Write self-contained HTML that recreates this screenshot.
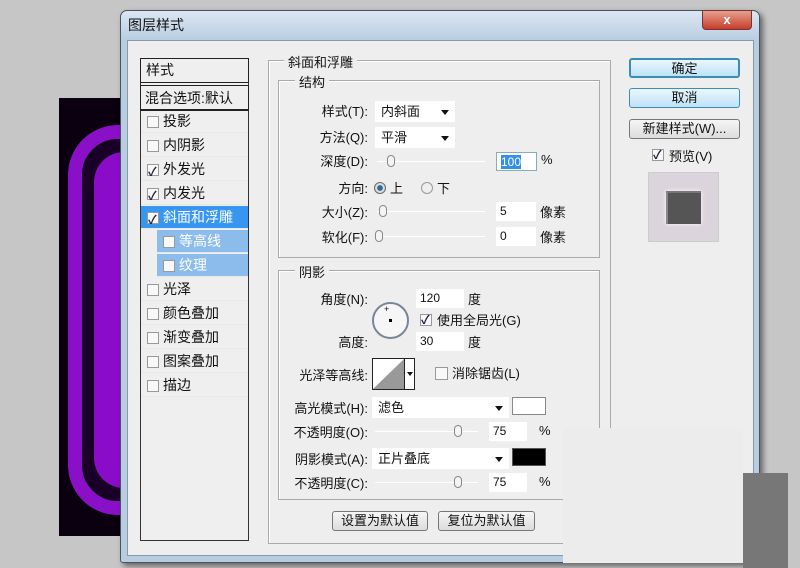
<!DOCTYPE html>
<html><head><meta charset="utf-8"><style>
*{margin:0;padding:0;box-sizing:border-box}
body{width:800px;height:568px;background:#c6c6c6;position:relative;overflow:hidden;font-family:"Liberation Sans","Noto Sans CJK SC",sans-serif;font-size:13px;color:#111}
.a{position:absolute}
.lbl{position:absolute;text-align:right;width:120px;white-space:nowrap;margin-top:-2px}
.in{position:absolute;background:#fff;height:19px;padding-left:4px;line-height:19px;font-size:12px}
.dd{position:absolute;background:#fff;height:21px;line-height:21px;padding-left:6px}
.dd:after{content:"";position:absolute;right:6px;top:9px;border:4px solid transparent;border-top:5px solid #111;border-bottom:0}
.sl{position:absolute;height:1px;background:#bbb;border-bottom:1px solid #fff}
.th{position:absolute;width:8px;height:12px;border:1px solid #888;border-radius:4px;background:#f4f4f4;top:-6px}
.cb{position:absolute;width:12px;height:12px;border:1px solid #999;background:#f8f8f8}
.ck:after{content:"✓";position:absolute;left:0;top:-4px;font-size:12px;color:#224;font-weight:bold}
.it{position:absolute;left:141px;width:107px;height:23px;line-height:23px;padding-left:22px;border-bottom:1px solid #e6e6e6;font-size:14px}
.it .cb{left:6px;top:6px}
.grp{position:absolute;border:1px solid #aaa;box-shadow:1px 1px 0 #fff inset}
.gt{position:absolute;background:#eee;padding:0 4px;font-size:13px}
.btn{position:absolute;height:20px;border:1px solid #777;border-radius:3px;background:linear-gradient(#f6f6f6,#dcdcdc);text-align:center;line-height:18px;font-size:13px}
.bb{border-color:#3c8cb8;background:linear-gradient(#eaf6fd,#bfe2f6)}
</style></head><body>
<!-- purple image -->
<div class="a" style="left:59px;top:98px;width:64px;height:438px;background:#0a0010"></div>
<div class="a" style="left:68px;top:125px;width:120px;height:390px;border:14px solid #8a10c8;border-radius:50px"></div>
<div class="a" style="left:82px;top:140px;width:100px;height:360px;border:12px solid #1a0028;border-radius:40px"></div>
<div class="a" style="left:94px;top:152px;width:80px;height:336px;background:#8a0cc8;border-radius:30px"></div>
<!-- dialog -->
<div class="a" style="left:120px;top:10px;width:640px;height:553px;background:linear-gradient(#dbe6f2,#b8cde2 30px,#b8cde2);border:1px solid #4a5360;border-radius:7px 7px 3px 3px;box-shadow:3px 3px 6px rgba(0,0,0,.5)"></div>
<div class="a" style="left:128px;top:15px;font-size:14px">图层样式</div>
<div class="a" style="left:702px;top:10px;width:50px;height:20px;background:linear-gradient(#e8a090,#c53d2a);border:1px solid #733;border-radius:0 0 4px 4px;color:#fff;text-align:center;font-weight:bold;line-height:18px">x</div>
<div class="a" style="left:127px;top:40px;width:627px;height:516px;background:#eeeeee;border:1px solid #8899aa"></div>
<!-- left list -->
<div class="a" style="left:140px;top:58px;width:109px;height:483px;border:1px solid #333;background:#efefef"></div>
<div class="a" style="left:140px;top:58px;width:109px;height:25px;border:1px solid #222;padding-left:5px;line-height:23px;font-size:14px">样式</div>
<div class="a" style="left:140px;top:85px;width:109px;height:26px;border:1px solid #222;border-width:1px 1px 2px;padding-left:4px;line-height:24px;font-size:14px">混合选项:默认</div>
<div class="it" style="top:110px"><span class="cb"></span>投影</div>
<div class="it" style="top:134px"><span class="cb"></span>内阴影</div>
<div class="it" style="top:158px"><span class="cb ck"></span>外发光</div>
<div class="it" style="top:182px"><span class="cb ck"></span>内发光</div>
<div class="it" style="top:206px;background:#3797f0;color:#fff"><span class="cb ck"></span>斜面和浮雕</div>
<div class="it" style="top:230px;left:157px;width:91px;background:#8cbcec;color:#fff"><span class="cb"></span>等高线</div>
<div class="it" style="top:254px;left:157px;width:91px;background:#8cbcec;color:#fff"><span class="cb"></span>纹理</div>
<div class="it" style="top:278px"><span class="cb"></span>光泽</div>
<div class="it" style="top:302px"><span class="cb"></span>颜色叠加</div>
<div class="it" style="top:326px"><span class="cb"></span>渐变叠加</div>
<div class="it" style="top:350px"><span class="cb"></span>图案叠加</div>
<div class="it" style="top:374px"><span class="cb"></span>描边</div>
<!-- main group -->
<div class="grp" style="left:268px;top:60px;width:343px;height:484px"></div>
<div class="gt" style="left:284px;top:52px">斜面和浮雕</div>
<div class="grp" style="left:278px;top:80px;width:322px;height:178px"></div>
<div class="gt" style="left:295px;top:72px">结构</div>
<div class="lbl" style="left:248px;top:103px">样式(T):</div>
<div class="dd" style="left:375px;top:101px;width:80px">内斜面</div>
<div class="lbl" style="left:248px;top:129px">方法(Q):</div>
<div class="dd" style="left:375px;top:127px;width:80px">平滑</div>
<div class="lbl" style="left:248px;top:153px">深度(D):</div>
<div class="sl" style="left:377px;top:161px;width:108px"><div class="th" style="left:10px"></div></div>
<div class="in" style="left:496px;top:152px;width:41px;border:1px solid #8ab"><span style="background:#3390e8;color:#fff">100</span></div>
<div class="a" style="left:541px;top:152px">%</div>
<div class="lbl" style="left:248px;top:180px">方向:</div>
<div class="a" style="left:374px;top:182px;width:12px;height:12px;border-radius:50%;border:1px solid #666;background:radial-gradient(#2a6aa0 35%,#ddd 45%)"></div>
<div class="a" style="left:390px;top:178px">上</div>
<div class="a" style="left:421px;top:182px;width:12px;height:12px;border-radius:50%;border:1px solid #999;background:#eee"></div>
<div class="a" style="left:437px;top:178px">下</div>
<div class="lbl" style="left:248px;top:204px">大小(Z):</div>
<div class="sl" style="left:377px;top:211px;width:108px"><div class="th" style="left:2px"></div></div>
<div class="in" style="left:496px;top:202px;width:40px">5</div>
<div class="a" style="left:540px;top:202px">像素</div>
<div class="lbl" style="left:248px;top:229px">软化(F):</div>
<div class="sl" style="left:377px;top:236px;width:108px"><div class="th" style="left:-2px"></div></div>
<div class="in" style="left:496px;top:227px;width:40px">0</div>
<div class="a" style="left:540px;top:227px">像素</div>
<div class="grp" style="left:278px;top:270px;width:322px;height:230px"></div>
<div class="gt" style="left:295px;top:262px">阴影</div>
<div class="lbl" style="left:248px;top:291px">角度(N):</div>
<div class="a" style="left:372px;top:302px;width:37px;height:37px;border-radius:50%;border:2px solid #7a8696;background:#f6f6f6"></div>
<div class="a" style="left:384px;top:304px;font-size:9px">+</div>
<div class="a" style="left:389px;top:319px;width:3px;height:3px;background:#000"></div>
<div class="in" style="left:416px;top:289px;width:48px">120</div>
<div class="a" style="left:468px;top:289px">度</div>
<div class="cb ck" style="left:420px;top:314px"></div>
<div class="a" style="left:437px;top:310px">使用全局光(G)</div>
<div class="lbl" style="left:248px;top:334px">高度:</div>
<div class="in" style="left:416px;top:332px;width:48px">30</div>
<div class="a" style="left:468px;top:332px">度</div>
<div class="lbl" style="left:248px;top:367px">光泽等高线:</div>
<div class="a" style="left:372px;top:358px;width:43px;height:32px;border:1px solid #222;background:#fff;overflow:hidden">
<svg width="32" height="30" style="position:absolute;left:0;top:0"><polygon points="0,30 31,0 31,30" fill="#999"/></svg>
<div class="a" style="left:31px;top:0;width:1px;height:30px;background:#222"></div>
<div class="a" style="left:34px;top:13px;border:3px solid transparent;border-top:4px solid #111"></div></div>
<div class="cb" style="left:435px;top:367px;width:13px;height:13px"></div>
<div class="a" style="left:452px;top:363px">消除锯齿(L)</div>
<div class="lbl" style="left:248px;top:400px">高光模式(H):</div>
<div class="dd" style="left:372px;top:397px;width:137px">滤色</div>
<div class="a" style="left:512px;top:397px;width:34px;height:18px;background:#fff;border:1px solid #888"></div>
<div class="lbl" style="left:248px;top:424px">不透明度(O):</div>
<div class="sl" style="left:375px;top:431px;width:103px"><div class="th" style="left:79px"></div></div>
<div class="in" style="left:489px;top:422px;width:38px">75</div>
<div class="a" style="left:539px;top:423px">%</div>
<div class="lbl" style="left:248px;top:451px">阴影模式(A):</div>
<div class="dd" style="left:372px;top:448px;width:137px">正片叠底</div>
<div class="a" style="left:512px;top:448px;width:34px;height:18px;background:#000;border:1px solid #555"></div>
<div class="lbl" style="left:248px;top:475px">不透明度(C):</div>
<div class="sl" style="left:375px;top:482px;width:103px"><div class="th" style="left:79px"></div></div>
<div class="in" style="left:489px;top:473px;width:38px">75</div>
<div class="a" style="left:539px;top:474px">%</div>
<div class="btn" style="left:332px;top:511px;width:96px">设置为默认值</div>
<div class="btn" style="left:438px;top:511px;width:97px">复位为默认值</div>
<!-- right buttons -->
<div class="btn bb" style="left:629px;top:58px;width:111px;border-width:2px">确定</div>
<div class="btn bb" style="left:629px;top:88px;width:111px">取消</div>
<div class="btn" style="left:629px;top:119px;width:111px">新建样式(W)...</div>
<div class="cb ck" style="left:652px;top:149px"></div>
<div class="a" style="left:669px;top:146px">预览(V)</div>
<div class="a" style="left:648px;top:172px;width:71px;height:70px;background:#dcd4dc;border:1px solid #ccc"></div>
<div class="a" style="left:666px;top:191px;width:35px;height:33px;background:#555;box-shadow:0 0 4px #fff;border-left:2px solid #888;border-top:2px solid #777"></div>
<!-- bottom-right overlay -->
<div class="a" style="left:563px;top:428px;width:180px;height:135px;background:#ececec"></div>
<div class="a" style="left:743px;top:473px;width:45px;height:95px;background:#777"></div>
</body></html>
